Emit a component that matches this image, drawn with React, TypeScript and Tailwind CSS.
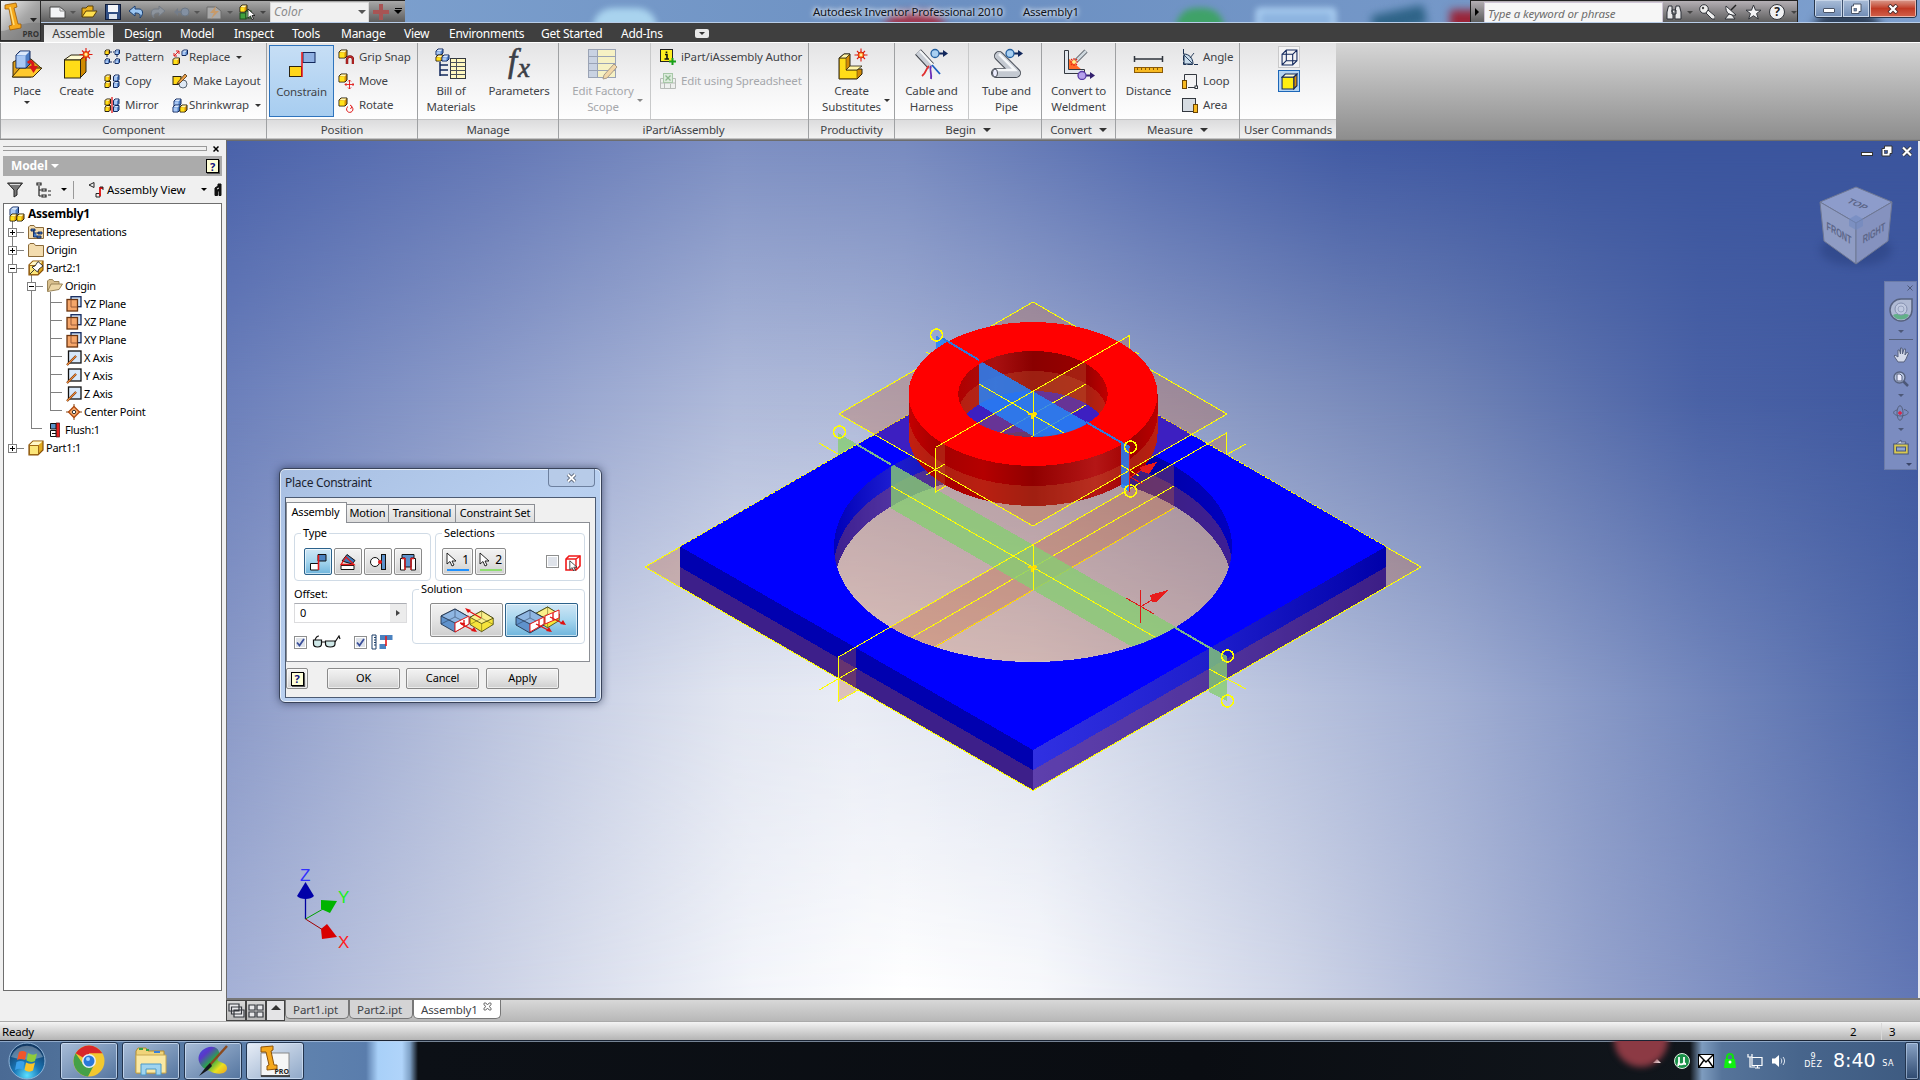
import type { ReactNode } from "react";
import clsx from "clsx";

const NAVY = "#12285c";
const TINT = "rgba(197,100,54,0.31)";
const GREEN = "rgba(135,205,115,0.8)";
const BLUE = "rgba(38,130,247,0.86)";

/* ---------- icon helpers ---------- */

function Svg({ w = 16, h = 16, className, children }: { w?: number; h?: number; className?: string; children: ReactNode }) {
  return (
    <svg width={w} height={h} viewBox={`0 0 ${w} ${h}`} className={clsx("block shrink-0", className)} fill="none">
      {children}
    </svg>
  );
}

// small isometric-ish block used in most of the ribbon icons
function Block({ x, y, w, h, d = 2, blue }: { x: number; y: number; w: number; h: number; d?: number; blue?: boolean }) {
  const front = blue ? "#a9c8f4" : "#ffe21a";
  const side = blue ? "#4f7fc4" : "#d9940a";
  const stroke = blue ? NAVY : "#2b2410";
  return (
    <g strokeWidth="1" strokeLinejoin="round">
      <path d={`M${x} ${y + d}l${d} ${-d}h${w}v${h}l${-d} ${d}h${-w}z`} fill={side} stroke={stroke} />
      <path d={`M${x + 0.5} ${y + d}l${d} ${-d + 0.5}h${w - 1}l${-d} ${d}z`} fill={blue ? "#dce9fb" : "#fff9b8"} />
      <rect x={x + 0.5} y={y + d + 0.5} width={w - 1} height={h - 1} fill={front} />
    </g>
  );
}

function Star({ x, y }: { x: number; y: number }) {
  return (
    <g transform={`translate(${x} ${y})`}>
      <path d="M0-6.5V6.5M-6.5 0H6.5M-4-4L4 4M4-4L-4 4" stroke="#e01b10" strokeWidth="1.1" />
      <circle r="3" fill="#ff7a1a" stroke="#d42a10" />
      <circle r="1.4" fill="#fff3a0" />
    </g>
  );
}

function Down({ className }: { className?: string }) {
  return <span className={clsx("block size-0 shrink-0 border-x-[3px] border-t-[3px] border-x-transparent", className ?? "border-t-[#333]")} />;
}

/* ---------- ribbon icons ---------- */

const PlaceIcon = () => (
  <Svg w={32} h={32}>
    <path d="M2 14L8 11H20L30 20L20 29H2z" fill="#e0a018" stroke="#3a2a08" />
    <path d="M1 29L9 20H31L22 29z" fill="#ffc92e" stroke="#3a2a08" />
    <Block x={5} y={3} w={10} h={13} d={4} blue />
    <path d="M17 15C20 12 22 14 22 18" stroke="#d81818" strokeWidth="3" />
    <path d="M18 18H27L22.500 25z" fill="#d81818" />
  </Svg>
);
const CreateIcon = () => (
  <Svg w={32} h={32}>
    <path d="M3 12L10 7H25L19 12z" fill="#fffbd0" stroke="#2b2410" />
    <path d="M19 12L25 7V24L19 30z" fill="#d08a00" stroke="#2b2410" />
    <rect x="3.500" y="12" width="16" height="18" fill="#ffdc18" stroke="#2b2410" />
    <Star x={25} y={6.500} />
  </Svg>
);
const ConstrainIcon = () => (
  <Svg w={30} h={28}>
    <rect x="16" y="2.500" width="12" height="10" fill="#8fb0e2" stroke={NAVY} />
    <rect x="2.500" y="16.500" width="12" height="10" fill="#ffd61a" stroke="#2b2410" />
    <path d="M15 2V27" stroke="#f01010" strokeWidth="1.500" />
  </Svg>
);
const BomIcon = () => (
  <Svg w={32} h={32}>
    <Block x={1} y={1} w={5} h={4} blue />
    <Block x={1} y={7} w={5} h={4} />
    <Block x={7} y={7} w={5} h={4} blue />
    <path d="M5 14V28M5 17H13M5 22H13M5 27H13" stroke={NAVY} strokeWidth="1.500" />
    <rect x="15.500" y="10.500" width="15" height="20" fill="#fff8c0" stroke="#33383f" />
    <path d="M15.500 14.500H30.500M15.500 18.500H30.500M15.500 22.500H30.500M15.500 26.500H30.500M21.500 10.500V30.500" stroke="#4d525b" />
  </Svg>
);
const FxIcon = () => (
  <span className="flex h-8 w-8 items-start pl-[5px] font-['Liberation_Serif',serif] text-[33px] leading-[27px] text-[#3c4048] italic [-webkit-text-stroke:0.6px_#3c4048]">
    f<span className="mt-[7px] ml-px text-[27px]">x</span>
  </span>
);
const TableIcon = () => (
  <Svg w={32} h={32}>
    <rect x="1.500" y="1.500" width="27" height="28" fill="#f6f1c4" stroke="#9aa3b5" />
    <rect x="2" y="2" width="8" height="27" fill="#c9d2e2" />
    <path d="M1 8.500H28M1 15.500H28M1 22.500H28M10.500 1V30" stroke="#9aa3b5" />
    <path d="M17 27L27 16L30 19L20 30L16 31z" fill="#f2d7a8" stroke="#a89a88" />
  </Svg>
);
const SubstituteIcon = () => (
  <Svg w={32} h={32}>
    <path d="M3 10L8 6H14V18L17 21H26V26L21 31H3z" fill="#d38b08" stroke="#2b2410" />
    <path d="M3.500 10H10V22H21V30.500H3.500z" fill="#ffdc18" stroke="#57430a" strokeWidth=".6" />
    <path d="M3.500 10L8 6H14L10 10zM10 22L14 18H26L21 22z" fill="#fff5a8" stroke="#2b2410" strokeWidth=".8" />
    <Star x={25} y={7} />
  </Svg>
);
const BallArrow = ({ x, y, purple }: { x: number; y: number; purple?: boolean }) => (
  <g transform={`translate(${x} ${y})`}>
    <path d="M4 0H9" stroke={purple ? "#33206e" : NAVY} strokeWidth="2" />
    <path d="M8-3.500L13 0L8 3.500z" fill={purple ? "#33206e" : NAVY} />
    <circle r="4" fill={purple ? "#b5a0ec" : "#a9d0f2"} stroke={purple ? "#5a3ca8" : "#2460a0"} strokeWidth="1.300" />
  </g>
);
const CableIcon = () => (
  <Svg w={34} h={32}>
    <path d="M3 4L16 18" stroke="#3d4148" strokeWidth="8" />
    <path d="M3 4L16 18" stroke="#c9ced6" strokeWidth="6" />
    <path d="M5 3L18 17" stroke="#f4f6f8" strokeWidth="2" />
    <path d="M14 18C11 20 12 24 7 28" stroke="#e03030" strokeWidth="1.800" />
    <path d="M16 18C14 22 17 24 16 31" stroke="#6a30b8" strokeWidth="1.800" />
    <path d="M17 17L25 26" stroke="#1a5fc0" strokeWidth="1.800" />
    <BallArrow x={20} y={5.500} />
  </Svg>
);
const TubeIcon = () => (
  <Svg w={34} h={32}>
    <path d="M9 8L26 25H6" stroke="#474c55" strokeWidth="10" strokeLinecap="round" strokeLinejoin="round" />
    <path d="M9 8L26 25H6" stroke="#c4c9d1" strokeWidth="8" strokeLinecap="round" strokeLinejoin="round" />
    <path d="M9 6L25 22H6" stroke="#f5f7f9" strokeWidth="2.500" />
    <ellipse cx="5" cy="25" rx="2.500" ry="4" fill="#eef" stroke="#474c55" />
    <BallArrow x={20} y={5.500} />
  </Svg>
);
const WeldIcon = () => (
  <Svg w={34} h={32}>
    <path d="M6 10L20 22H6z" fill="#ff6a28" />
    <path d="M2.500 2.500H6.500V21.500H22.500V25.500H2.500z" fill="#e3e8ee" stroke="#33383f" />
    <path d="M14 13L24 3" stroke="#5a6068" strokeWidth="4.500" />
    <path d="M14 13L24 3" stroke="#cfd8de" strokeWidth="2.500" />
    <path d="M12 10V18M8 14H16M9 11L15 17M15 11L9 17" stroke="#e82c10" strokeWidth="1.200" />
    <circle cx="12" cy="14" r="2" fill="#fff08a" />
    <BallArrow x={20} y={27.500} purple />
  </Svg>
);
const DistanceIcon = () => (
  <Svg w={32} h={32}>
    <path d="M1.500 8V14M29.500 8V14M1.500 11H29.500" stroke="#2f343c" strokeWidth="1.500" />
    <rect x="1.500" y="19.500" width="28" height="5" fill="#f7b921" stroke="#8a5a08" />
    <path d="M4.500 20V22M8.500 20V22M12.500 20V22M16.500 20V22M20.500 20V22M24.500 20V22" stroke="#8a5a08" />
  </Svg>
);

const PatternIcon = () => (
  <Svg>
    <path d="M6 3H10M3 6V10M13 6V10M6 13H10" stroke={NAVY} strokeDasharray="2 1" />
    <Block x={1} y={1} w={3.500} h={3.500} d={1} />
    <Block x={11} y={1} w={3.500} h={3.500} d={1} blue />
    <Block x={1} y={10} w={3.500} h={3.500} d={1} blue />
    <Block x={11} y={10} w={3.500} h={3.500} d={1} blue />
  </Svg>
);
const CopyIcon = ({ mirror }: { mirror?: boolean }) => (
  <Svg>
    <Block x={1} y={2} w={4} h={4.500} d={1.500} />
    <Block x={1} y={8.500} w={4} h={4.500} d={1.500} />
    <Block x={9.500} y={2} w={4} h={4.500} d={1.500} blue />
    <Block x={9.500} y={8.500} w={4} h={4.500} d={1.500} blue />
    {mirror && <path d="M8 0V16" stroke="#e01818" strokeWidth="1.300" />}
  </Svg>
);
const ReplaceIcon = () => (
  <Svg>
    <Block x={10} y={1} w={4} h={4} d={1.500} blue />
    <Block x={1} y={9} w={5} h={5} d={1.500} />
    <path d="M2 7L7 2M2 4V7H5M4 2H7V5" stroke="#e01818" />
  </Svg>
);
const LayoutIcon = () => (
  <Svg>
    <rect x="1" y="3.500" width="8" height="8" fill="#ffd81a" stroke="#2b2410" />
    <circle cx="11" cy="11" r="4" fill="#dfe9f5" stroke="#5a6572" />
    <path d="M6 9L13 1L15 3L8 10L5 11z" fill="#eca04a" stroke="#4a3010" strokeWidth=".8" />
  </Svg>
);
const ShrinkIcon = () => (
  <Svg>
    <Block x={2} y={2} w={5} h={5} blue />
    <Block x={1} y={8} w={5} h={5} blue />
    <Block x={8} y={8} w={5} h={5} />
  </Svg>
);
const GripIcon = () => (
  <Svg>
    <Block x={1} y={1} w={6} h={6} />
    <path d="M9 15V10.500a3 3 0 0 1 6 0V15" stroke="#7a1010" strokeWidth="2.500" />
    <path d="M9 15V10.500a3 3 0 0 1 6 0V15" stroke="#d83030" strokeWidth="1" />
  </Svg>
);
const MoveIcon = () => (
  <Svg>
    <Block x={1} y={1} w={6} h={6} />
    <path d="M11.500 7V16M7 11.500H16M10 8.500L11.500 7L13 8.500M10 14.500L11.500 16L13 14.500M8.500 10L7 11.500L8.500 13M14.500 10L16 11.500L14.500 13" stroke="#e01818" strokeWidth=".9" />
  </Svg>
);
const RotateIcon = () => (
  <Svg>
    <Block x={1} y={1} w={6} h={6} />
    <path d="M13.500 9.500A3.200 3.200 0 1 1 10 9.500M12 8l2 1.500L12.500 12" stroke="#e01818" />
  </Svg>
);
const AuthorIcon = () => (
  <Svg>
    <rect x=".5" y=".5" width="12" height="12" fill="#ffee20" stroke="#222" />
    <path d="M6.500 2.500V4M5 5.500H7V10M4.500 10H9" stroke="#111" strokeWidth="1.600" />
    <path d="M12.500 9V16M9 12.500H16" stroke="#18a018" strokeWidth="2" />
  </Svg>
);
const SheetIcon = () => (
  <Svg>
    <path d="M.5 5.500H15.500V15.500H.5zM.5 10H15.500M4.500 5V15M10.500 11V15" fill="#eef0ee" stroke="#b8bcb8" />
    <rect x="3.500" y=".5" width="9" height="9" fill="#dcebdc" stroke="#a8c8a8" />
    <path d="M5.500 2.500L10.500 7.500M10.500 2.500L5.500 7.500" stroke="#8cb88c" strokeWidth="1.300" />
  </Svg>
);
const AngleIcon = () => (
  <Svg>
    <path d="M1.500 0V15.500H16" stroke="#1a3050" strokeDasharray="5 1.500" />
    <path d="M2 5C7 5 11 9 11 15H2z" fill="#c9dceb" stroke="#1a3050" />
    <path d="M2 6L10 14M8 9L12 4" stroke="#1a3050" strokeWidth=".9" />
  </Svg>
);
const LoopIcon = () => (
  <Svg>
    <path d="M2.500 7V1.500H14.500V14.500H6" stroke="#33383f" />
    <rect x="13" y="13" width="2.500" height="2.500" fill="#fff" stroke="#33383f" />
    <rect x=".5" y="7.500" width="4" height="8" fill="#f7b921" stroke="#6b4505" />
  </Svg>
);
const AreaIcon = () => (
  <Svg>
    <rect x=".5" y="1.500" width="13" height="13" fill="#d6dce2" stroke="#33383f" />
    <rect x="11.500" y="7.500" width="4" height="8" fill="#f7b921" stroke="#6b4505" />
  </Svg>
);

/* ---------- ribbon ---------- */

function Big({ icon, label, sub, width, arrow, dim }: { icon: ReactNode; label: string; sub?: string; width: string; arrow?: boolean; dim?: boolean }) {
  return (
    <div className={clsx("relative flex flex-col items-center pt-[5px] text-center", width, dim ? "text-[#a5a7ab]" : "text-[#3f4347]")}>
      <div className="flex h-8 items-center justify-center">{icon}</div>
      <span className="mt-[3px] leading-4">{label}</span>
      {sub && <span className="leading-4">{sub}</span>}
      {arrow && !sub && <Down className="mt-[2px] border-t-[#333]" />}
      {arrow && sub && <Down className={clsx("absolute right-0 bottom-[17px]", dim ? "border-t-[#888]" : "border-t-[#333]")} />}
    </div>
  );
}

function Small({ icon, label, arrow, gap = "gap-[5px]", dim }: { icon: ReactNode; label: string; arrow?: boolean; gap?: string; dim?: boolean }) {
  return (
    <div className={clsx("flex h-6 items-center whitespace-nowrap", gap, dim ? "text-[#a5a7ab]" : "text-[#3f4347]")}>
      {icon}
      <span>{label}</span>
      {arrow && <Down className="ml-[5px] border-t-[#333]" />}
    </div>
  );
}

function Panel({ width, title, arrow, children }: { width: string; title: string; arrow?: boolean; children: ReactNode }) {
  return (
    <div className={clsx("flex shrink-0 flex-col border-r border-[#9fa1a3]", width)}>
      <div className="flex h-[76px] bg-linear-to-b from-[#e4e4e5] via-[#f3f3f4] to-[#fefefe]">{children}</div>
      <div className="flex h-5 items-center justify-center gap-[7px] border-y border-[#c3c3c4] bg-linear-to-b from-[#dcdcdd] to-[#f2f2f2] pt-[2px] text-[#3f4347]">
        {title}
        {arrow && <span className="block size-0 border-x-4 border-t-4 border-x-transparent border-t-[#333]" />}
      </div>
    </div>
  );
}

const Rows = ({ className, children }: { className?: string; children: ReactNode }) => (
  <div className={clsx("flex flex-col pt-[2px]", className)}>{children}</div>
);

function Ribbon() {
  return (
    <div className="flex h-[98px] border-t border-b border-t-white border-b-[#888] bg-linear-to-b from-[#d6d6d6] to-[#8e8e8e] font-['Noto_Sans',sans-serif] text-[11.5px] tracking-[-0.15px]">
      <Panel width="w-[267px] border-l" title="Component">
        <Big icon={<PlaceIcon />} label="Place" width="w-[51px] pl-px" arrow />
        <Big icon={<CreateIcon />} label="Create" width="w-[49px]" />
        <Rows className="ml-[3px] w-[68px]">
          <Small icon={<PatternIcon />} label="Pattern" />
          <Small icon={<CopyIcon />} label="Copy" />
          <Small icon={<CopyIcon mirror />} label="Mirror" />
        </Rows>
        <Rows>
          <Small icon={<ReplaceIcon />} label="Replace" arrow gap="gap-px" />
          <Small icon={<LayoutIcon />} label="Make Layout" />
          <Small icon={<ShrinkIcon />} label="Shrinkwrap" arrow gap="gap-px" />
        </Rows>
      </Panel>
      <Panel width="w-[151px]" title="Position">
        <div className="mt-[2px] ml-[2px] flex h-[72px] w-[65px] flex-col items-center border border-[#2f74bd] bg-linear-to-b from-[#c6def5] to-[#a7cdf0] pt-[4px] text-[#3f4347]">
          <ConstrainIcon />
          <span className="mt-[6px] leading-4">Constrain</span>
        </div>
        <Rows className="ml-1">
          <Small icon={<GripIcon />} label="Grip Snap" />
          <Small icon={<MoveIcon />} label="Move" />
          <Small icon={<RotateIcon />} label="Rotate" />
        </Rows>
      </Panel>
      <Panel width="w-[141px]" title="Manage">
        <Big icon={<BomIcon />} label="Bill of" sub="Materials" width="w-[66px]" />
        <Big icon={<FxIcon />} label="Parameters" width="w-[70px]" />
      </Panel>
      <Panel width="w-[250px]" title="iPart/iAssembly">
        <Big icon={<TableIcon />} label="Edit Factory" sub="Scope" width="w-[84px] pl-[4px] mr-[7px]" arrow dim />
        <Rows className="border-l border-[#c8c9ca] pl-[9px]">
          <Small icon={<AuthorIcon />} label="iPart/iAssembly Author" />
          <Small icon={<SheetIcon />} label="Edit using Spreadsheet" dim />
        </Rows>
      </Panel>
      <Panel width="w-[86px]" title="Productivity">
        <Big icon={<SubstituteIcon />} label="Create" sub="Substitutes" width="w-[81px] pl-[4px]" arrow />
      </Panel>
      <Panel width="w-[147px]" title="Begin" arrow>
        <Big icon={<CableIcon />} label="Cable and" sub="Harness" width="w-[73px]" />
        <Big icon={<TubeIcon />} label="Tube and" sub="Pipe" width="border-l border-[#c8c9ca] pl-[3px] flex-1" />
      </Panel>
      <Panel width="w-[74px]" title="Convert" arrow>
        <Big icon={<WeldIcon />} label="Convert to" sub="Weldment" width="w-full" />
      </Panel>
      <Panel width="w-[124px]" title="Measure" arrow>
        <Big icon={<DistanceIcon />} label="Distance" width="w-[65px]" />
        <Rows className="ml-[1px]">
          <Small icon={<AngleIcon />} label="Angle" />
          <Small icon={<LoopIcon />} label="Loop" />
          <Small icon={<AreaIcon />} label="Area" />
        </Rows>
      </Panel>
      <Panel width="w-[96px] border-r-0" title="User Commands">
        <div className="flex flex-1 flex-col items-center gap-[2px] pt-[3px] pl-[2px]">
          <div className="grid size-[22px] place-items-center border border-[#c9c9ca] bg-[#f4f4f5]">
            <Svg className="size-[17px]">
              <path d="M1 5H11V15H1zM1 5L5 1H15V11L11 15M11 5L15 1M5 1V11H15M5 11L1 15" stroke={NAVY} />
            </Svg>
          </div>
          <div className="grid size-[22px] place-items-center border border-[#1b66b8] bg-[#b4d4f2]">
            <Svg className="size-[17px]">
              <path d="M1 4L4 1H15L12 4z" fill="#fffbd0" stroke={NAVY} />
              <path d="M12 4L15 1V12L12 15z" fill="#d89008" stroke={NAVY} />
              <path d="M1 4H12V15H1z" fill="#ffee10" stroke={NAVY} />
            </Svg>
          </div>
        </div>
      </Panel>
    </div>
  );
}

/* ---------- title bar ---------- */

const menuTabs = [
  ["Design", "w-14"],
  ["Model", "w-[54px]"],
  ["Inspect", "w-[58px]"],
  ["Tools", "w-[49px]"],
  ["Manage", "w-[63px]"],
  ["View", "w-[45px]"],
  ["Environments", "w-[92px]"],
  ["Get Started", "w-[80px]"],
  ["Add-Ins", "w-[74px]"],
];

function TitleBar() {
  return (
    <header className="relative h-[42px] bg-[#3f3f3f] font-['Noto_Sans',sans-serif]">
      <div className="relative h-[23px] overflow-hidden border-b border-[#b8cde8] bg-linear-to-r from-[#86a9d4] via-[#6c90c2] to-[#7d9fce]">
        {/* blurred desktop behind the glass */}
        <div className="absolute top-[8px] left-[593px] h-10 w-[64px] rounded-full bg-[#a9d3ee] blur-[3px]" />
        <div className="absolute top-[12px] left-[884px] h-10 w-[62px] rounded-full bg-[#a03850] blur-[4px]" />
        <div className="absolute top-[8px] left-[1176px] h-10 w-[48px] rounded-full bg-[#3fa268] blur-[3px]" />
        <div className="absolute top-[8px] left-[1256px] h-10 w-[80px] rounded border-4 border-[#b5d8f8] bg-[#8db4e0] blur-[3px]" />
        <div className="absolute top-[10px] left-[1372px] h-5 w-[54px] -rotate-12 rounded bg-[#2f6488] blur-[4px]" />
        <div className="absolute top-[10px] left-[1450px] h-10 w-[44px] bg-[#9a2438] blur-[4px]" />
        <div className="absolute top-[10px] left-[1812px] h-12 w-[70px] rounded-full bg-[#31435c] blur-[5px]" />
        <div className="relative flex h-full items-start">
          <div className="h-full w-[41px] bg-[#3a3a3a]" />
          <div className="flex h-[23px] w-[364px] shrink-0 items-center border-t border-[#222] bg-linear-to-b from-[#a9a9a9] to-[#5a5a5a] pl-2">
            <Svg w={17} h={14}>
              <path d="M1 2H11L16 6V13H1z" fill="#f3f4f6" stroke="#444" />
              <path d="M11 2V6H16" stroke="#888" />
            </Svg>
            <Down className="ml-[4px] border-t-[#555]" />
            <Svg w={17} h={14} className="ml-[5px]">
              <path d="M1 12V3H5L7 1H12V5" fill="#e8b020" stroke="#5a4008" />
              <path d="M1 12L5 6H16L12 12z" fill="#ffe050" stroke="#5a4008" />
            </Svg>
            <Svg w={16} h={16} className="ml-[7px]">
              <rect x=".5" y=".5" width="15" height="15" fill="#314f84" stroke="#101c38" />
              <rect x="3" y="1" width="10" height="7" fill="#f4f6fa" />
              <rect x="4" y="10" width="8" height="5" fill="#dfe6f0" />
            </Svg>
            <Svg w={16} h={14} className="ml-[7px]">
              <path d="M1 6L7 1V4H11C15 4 16 9 12 13C13 9 11 8 7 8V11z" fill="#9cc6f2" stroke="#1c3f70" />
            </Svg>
            <Svg w={16} h={14} className="ml-[6px]">
              <path d="M15 6L9 1V4H5C1 4 0 9 4 13C3 9 5 8 9 8V11z" fill="#8d949d" stroke="#747b84" />
            </Svg>
            <Svg w={18} h={14} className="ml-[7px]">
              <path d="M1 7L5 3V6H9V8H5V11z" fill="#747c88" />
              <circle cx="12" cy="7" r="4" fill="#8390a2" stroke="#6d7885" />
            </Svg>
            <Down className="ml-[3px] border-t-[#555]" />
            <Svg w={17} h={15} className="ml-[6px]">
              <path d="M1 2H10L15 6V14H1z" fill="#a9a9a9" stroke="#6c6c6c" />
              <path d="M10 1L4 8H8L5 14L13 6H9z" fill="#c79a6a" />
            </Svg>
            <Down className="ml-[4px] border-t-[#555]" />
            <Svg w={17} h={16} className="ml-[6px]">
              <Block x={1} y={1} w={5} h={5} />
              <rect x="1" y="9" width="6" height="6" fill="#3fa03f" stroke="#1c4c1c" />
              <rect x="7" y="7" width="5" height="7" fill="#8ed08e" stroke="#1c4c1c" />
              <path d="M9 5V14L11.500 12L13 15.500L14.500 15L13 11.500H16z" fill="#fff" stroke="#111" strokeWidth=".8" />
            </Svg>
            <Down className="ml-[4px] border-t-[#444]" />
            <div className="ml-[4px] flex h-[21px] w-[99px] shrink-0 items-center justify-between border border-[#d8d8d8] bg-[#f0f0f0] pr-[2px] pl-[3px] text-[12px] text-[#8a8a8a] italic">
              Color
              <span className="block size-0 border-x-4 border-t-4 border-x-transparent border-t-[#555]" />
            </div>
            <Svg w={16} h={16} className="ml-[4px]">
              <path d="M6 0h4v6h6v4h-6v6h-4v-6h-6v-4h6z" fill="#a85454" />
            </Svg>
            <span className="mb-[2px] ml-[5px] flex flex-col items-center gap-px">
              <i className="block h-px w-[7px] bg-black" />
              <i className="block size-0 border-x-4 border-t-4 border-x-transparent border-t-black" />
            </span>
          </div>
          <div className="flex flex-1 gap-[20px] pt-[4px] pl-[408px] text-[11.5px] leading-4 tracking-[-0.25px] whitespace-nowrap text-[#10151c] [text-shadow:0_0_6px_#fff,0_0_4px_#fff]">
            <span>Autodesk Inventor Professional 2010</span>
            <span>Assembly1</span>
          </div>
          <div className="flex h-[23px] w-[328px] shrink-0 items-center border-x border-t border-[#222] bg-linear-to-b from-[#b5b0b5] to-[#5a5a5a]">
            <span className="ml-[4px] block size-0 border-y-4 border-l-4 border-y-transparent border-l-black" />
            <div className="ml-[5px] flex h-[21px] w-[180px] items-center border border-[#cfc6d6] bg-[#f6f6f6] pt-1 pl-[3px] text-[11.5px] tracking-[-0.1px] text-[#6c6c6c] italic">
              Type a keyword or phrase
            </div>
            <Svg w={16} h={16} className="ml-[3px]">
              <path d="M2.500 2H6V8H7V15H1V8zM10 2H13.500L15 8V15H9V8zM6 6H10V10H6z" fill="#e8e8ea" stroke="#2d3038" />
            </Svg>
            <Down className="ml-[5px] border-t-[#444]" />
            <Svg w={16} h={16} className="ml-[6px]">
              <circle cx="5" cy="5" r="4.300" fill="#eee" stroke="#33363c" />
              <path d="M7 9L13 15H16V12L9 6z" fill="#eee" stroke="#33363c" />
              <circle cx="4" cy="4" r="1.200" fill="#444" />
            </Svg>
            <Svg w={15} h={16} className="ml-[8px]">
              <path d="M3 2C2 9 7 12 13 11z" fill="#f3f3f4" stroke="#33363c" />
              <path d="M8 6L13 1" stroke="#222" strokeWidth="1.500" />
              <path d="M6 10L2 15H12L9 11z" fill="#eee" stroke="#33363c" />
            </Svg>
            <Svg w={17} h={16} className="ml-[7px]">
              <path d="M8.500 1L10.500 6.200H16L11.600 9.500L13.300 15L8.500 11.700L3.700 15L5.400 9.500L1 6.200H6.500z" fill="#f4f4f6" stroke="#33363c" />
            </Svg>
            <span className="ml-[7px] grid size-4 shrink-0 place-items-center rounded-full border border-[#33363c] bg-[#f0f0f2] text-[12px] leading-none font-bold text-[#222]">?</span>
            <Down className="ml-[6px] border-t-[#444]" />
          </div>
          <div className="mr-[3px] ml-4 flex h-[18px] w-[103px] shrink-0 overflow-hidden rounded-b-[4px] border border-t-0 border-[#27364c] text-white">
            <div className="grid w-7 place-items-center border-r border-[#3c506e] bg-linear-to-b from-[#a9bdd8] to-[#6f8bb4] shadow-[inset_0_0_0_1px_#c7d5e8]">
              <i className="mt-1 block h-[5px] w-3 rounded-[1px] border border-[#4b566a] bg-white" />
            </div>
            <div className="grid w-[27px] place-items-center border-r border-[#3c506e] bg-linear-to-b from-[#a9bdd8] to-[#6f8bb4] shadow-[inset_0_0_0_1px_#c7d5e8]">
              <Svg w={12} h={12}>
                <path d="M3.500 1H11V8.500H9V10.500H1.500V3H3.500z" fill="#fff" stroke="#4b566a" />
                <rect x="4" y="5.500" width="2.500" height="2.500" fill="#6f8bb4" stroke="#4b566a" strokeWidth=".7" />
              </Svg>
            </div>
            <div className="grid flex-1 place-items-center bg-linear-to-b from-[#d8998c] via-[#c03a24] to-[#d2604a] shadow-[inset_0_0_0_1px_#eab5ab]">
              <Svg w={12} h={10}>
                <path d="M2 1L10 9M10 1L2 9" stroke="#4b2a2a" strokeWidth="4" />
                <path d="M2.500 1.500L9.500 8.500M9.500 1.500L2.500 8.500" stroke="#fff" strokeWidth="2.300" />
              </Svg>
            </div>
          </div>
        </div>
      </div>
      <nav className="flex h-[19px] items-end pl-11 text-[12px] leading-4 tracking-[-0.25px] whitespace-nowrap text-white">
        <span className="h-[17px] w-[69px] bg-linear-to-b from-[#dcdcdc] to-[#f0f0f0] pt-px text-center text-[#3c3c3c]">Assemble</span>
        <span className="w-[11px]" />
        {menuTabs.map(([label, width]) => (
          <span key={label} className={clsx("shrink-0", width)}>
            {label}
          </span>
        ))}
        <span className="mb-[4px] grid h-[9px] w-[14px] place-items-center rounded-[2px] bg-[#e8e8e8]">
          <Down />
        </span>
      </nav>
      {/* application button */}
      <div className="absolute top-0 left-0 h-[41px] w-[41px] border border-[#2a2a2a] bg-linear-to-br from-[#f4f4f4] via-[#a8a8a8] to-[#7d7d7d]">
        <svg width="39" height="39" viewBox="0 0 39 39" fill="none">
          <path d="M0 30C10 30 18 20 39 22V39H0z" fill="#707070" opacity=".45" />
          <path d="M4 4L15 2L16 6L13 7L17 23L20 23L20 27L9 29L8 25L11 24L8 8L4 8z" fill="#f5a81c" stroke="#9c5c08" strokeWidth=".8" />
          <path d="M9 6L13 24" stroke="#ffdf80" strokeWidth="1.500" />
          <path d="M29 17H36L32.500 21z" fill="#222" />
        </svg>
        <span className="absolute right-[1px] bottom-[1px] text-[8px] leading-[10px] font-bold text-[#333]">PRO</span>
      </div>
    </header>
  );
}

/* ---------- model browser ---------- */

type Kind = "asm" | "rep" | "folder" | "pinned" | "open" | "plane" | "axis" | "point" | "flush" | "part";

function TreeIcon({ kind }: { kind: Kind }) {
  switch (kind) {
    case "asm":
      return (
        <Svg>
          <Block x={1} y={1} w={6} h={6} d={2.500} blue />
          <Block x={1} y={8} w={5} h={5} />
          <Block x={8} y={8} w={5} h={5} />
        </Svg>
      );
    case "rep":
    case "folder":
      return (
        <Svg>
          <path d="M.5 14.500V3L2 1.500H6L7.500 3.500H15.500V14.500z" fill="#f3dcae" stroke="#8a6a3a" />
          {kind === "rep" && <path d="M5.500 6V13H10M5.500 9H12M3 5H7V7H3zM10 8H14V10H10zM9 12H13V14H9z" fill="#3f7ac8" stroke={NAVY} strokeWidth=".9" />}
        </Svg>
      );
    case "open":
      return (
        <Svg>
          <path d="M.5 13V3L2 1.500H5.500L7 3.500H12V6" fill="#d9c08e" stroke="#9a8458" />
          <path d="M.5 13.500L4 6H15.500L12 11.500z" fill="#ecd6a6" stroke="#9a8458" />
        </Svg>
      );
    case "part":
    case "pinned":
      return (
        <Svg>
          <path d="M1 5L5 1H15V10L10 15H1z" fill="#e0aa20" stroke="#8a5208" strokeWidth="1.200" />
          <path d="M1.500 5L5 1.500H14.500L10.500 5z" fill="#fff8c8" />
          <path d="M1.500 5.500H10.500V14.500H1.500z" fill="#fbe67a" stroke="#8a5208" strokeWidth=".8" />
          {kind === "pinned" && <path d="M2 14L6.500 9.500L4 7L7 6L10 1.500L15 6L11 9L9.500 12L6.500 9.500" fill="#fff" stroke="#222" strokeWidth=".9" />}
        </Svg>
      );
    case "plane":
      return (
        <Svg>
          <rect x="5" y=".7" width="10" height="10" fill="#cfe2f8" stroke={NAVY} strokeWidth="1.300" />
          <rect x="1" y="3.500" width="10.500" height="11.500" fill="#f5a66a" stroke="#6b3510" strokeWidth="1.300" />
          <path d="M5 4V11H11" stroke="#9a5a38" />
        </Svg>
      );
    case "axis":
      return (
        <Svg>
          <rect x="2.500" y="1" width="12.500" height="12" fill="#d8e8fa" stroke="#111" strokeWidth="1.300" />
          <path d="M1 15L10 6" stroke="#4a2408" strokeWidth="2.200" />
          <path d="M1 15L10 6" stroke="#f08838" strokeWidth="1.200" />
        </Svg>
      );
    case "point":
      return (
        <Svg>
          <path d="M8 0V16M0 8H16" stroke="#8a4a18" />
          <path d="M8 2.500L13.500 8L8 13.500L2.500 8z" fill="#f8a868" stroke="#b04a10" strokeWidth="1.300" />
          <circle cx="8" cy="8" r="1.700" fill="#fff" stroke="#333" />
        </Svg>
      );
    default:
      return (
        <Svg>
          <path d="M3.500 1.500H9V7H3.500z" fill="#5b93c8" stroke="#111" />
          <path d="M3.500 8.500H9V14.500H3.500zM5 11.500H9" fill="#fff" stroke="#111" />
          <rect x="9.500" y="1" width="3" height="14" fill="#e82020" stroke="#500" strokeWidth=".7" />
        </Svg>
      );
  }
}

const tree: { label: string; kind: Kind; pad: string; box?: "+" | "-" }[] = [
  { label: "Representations", kind: "rep", pad: "pl-[4px]", box: "+" },
  { label: "Origin", kind: "folder", pad: "pl-[4px]", box: "+" },
  { label: "Part2:1", kind: "pinned", pad: "pl-[4px]", box: "-" },
  { label: "Origin", kind: "open", pad: "pl-[23px]", box: "-" },
  { label: "YZ Plane", kind: "plane", pad: "pl-[62px]" },
  { label: "XZ Plane", kind: "plane", pad: "pl-[62px]" },
  { label: "XY Plane", kind: "plane", pad: "pl-[62px]" },
  { label: "X Axis", kind: "axis", pad: "pl-[62px]" },
  { label: "Y Axis", kind: "axis", pad: "pl-[62px]" },
  { label: "Z Axis", kind: "axis", pad: "pl-[62px]" },
  { label: "Center Point", kind: "point", pad: "pl-[62px]" },
  { label: "Flush:1", kind: "flush", pad: "pl-[43px]" },
  { label: "Part1:1", kind: "part", pad: "pl-[4px]", box: "+" },
];

function HelpIcon() {
  return (
    <span className="grid h-[14px] w-[13px] place-items-center border border-black bg-[#ffffd8] text-[11px] leading-none font-bold text-[#101080] shadow-[1px_1px_0_#555]">?</span>
  );
}

function Browser() {
  return (
    <aside className="flex w-[226px] shrink-0 flex-col bg-[#f0f0f0] pr-[3px] pl-[3px] font-['Noto_Sans',sans-serif] text-[11px] text-black">
      <div className="flex h-[16px] items-center gap-[6px] pt-[1px]">
        <div className="h-[5px] w-[204px] border border-l-0 border-[#9a9a9a]" />
        <Svg w={6} h={6}>
          <path d="M.5 .5L5.500 5.500M5.500 .5L.5 5.500" stroke="#000" strokeWidth="1.500" />
        </Svg>
      </div>
      <div className="flex h-5 w-[219px] items-center bg-[#ababab] pr-[3px] pl-[8px] text-[12px] font-bold tracking-[-0.1px] text-white">
        Model
        <span className="ml-[3px] block size-0 border-x-4 border-t-4 border-x-transparent border-t-white" />
        <span className="flex-1" />
        <HelpIcon />
      </div>
      <div className="flex h-[27px] w-[219px] items-center pl-[4px] text-[11.5px] tracking-[-0.1px]">
        <Svg>
          <path d="M.5 1H15.500L10 8V13L7 15V8z" fill="#777" stroke="#222" />
          <path d="M3 2.500H13" stroke="#ddd" />
        </Svg>
        <Svg className="ml-[13px]">
          <path d="M1 1H5V3H1zM3 4V14M3 8H5M3 14H5M6 7H10V9H6zM6 13H10V15H6zM12 9H15M12 13H15" stroke="#222" strokeWidth="1.200" />
        </Svg>
        <Down className="ml-[9px] border-t-black" />
        <span className="mx-[6px] h-[18px] w-px bg-[#999]" />
        <Svg className="ml-[8px]">
          <path d="M1 3L6 .5V5.500z" stroke="#222" />
          <path d="M8 11.500H12V15H8z" stroke="#222" />
          <path d="M12 14V6H15" stroke="#e01010" strokeWidth="1.800" />
          <path d="M12 5H15V8" stroke="#222" />
        </Svg>
        <span className="ml-[3px] w-[79px] whitespace-nowrap">Assembly View</span>
        <Down className="ml-[15px] border-t-black" />
        <Svg w={8} h={14} className="ml-[7px]">
          <path d="M1 5L4 3V1H7V12.500H5V8H3.500V12.500H1z" fill="#111" stroke="#111" />
          <path d="M3 6L5 5" stroke="#f0f0f0" />
        </Svg>
      </div>
      <div className="relative h-[788px] w-[219px] border border-[#6e6e6e] bg-white pt-[1px]">
        <svg className="absolute top-0 left-0" width="80" height="250" stroke="#808080" shapeRendering="crispEdges" fill="none">
          <path d="M8.500 17V240M27.500 70V224.500H38M46.500 88V206.500H58M46.500 98.500H58M46.500 116.500H58M46.500 134.500H58M46.500 152.500H58M46.500 170.500H58M46.500 188.500H58" />
        </svg>
        <div className="relative flex h-[18px] items-center gap-[3px] pl-[5px] text-[12px] font-bold tracking-[-0.25px]">
          <TreeIcon kind="asm" />
          Assembly1
        </div>
        {tree.map((item, i) => (
          <div key={i} className={clsx("relative flex h-[18px] items-center whitespace-nowrap", item.pad)}>
            {item.box && (
              <>
                <span className="grid size-[9px] place-items-center border border-[#808080] bg-white">
                  <Svg w={5} h={5}>
                    <path d={item.box === "+" ? "M0 2.500H5M2.500 0V5" : "M0 2.500H5"} stroke="#000" />
                  </Svg>
                </span>
                <span className="mr-[4px] h-px w-[7px] bg-[#808080]" />
              </>
            )}
            <TreeIcon kind={item.kind} />
            <span className="ml-[2px] tracking-[-0.25px]">{item.label}</span>
          </div>
        ))}
      </div>
    </aside>
  );
}

/* ---------- 3D scene ---------- */

function Scene() {
  return (
    <svg className="absolute -top-px -left-px" width="1694" height="858" viewBox="226 140 1694 858" fill="none" shapeRendering="crispEdges">
      <defs>
        <linearGradient id="slabRight" gradientUnits="userSpaceOnUse" x1="1033" y1="0" x2="1386" y2="0">
          <stop offset="0" stopColor="#3030e2" />
          <stop offset=".5" stopColor="#1e1ecc" />
          <stop offset="1" stopColor="#0000aa" />
        </linearGradient>
        <linearGradient id="holeWall" gradientUnits="userSpaceOnUse" x1="834" y1="0" x2="1232" y2="0">
          <stop offset="0" stopColor="#0000b8" />
          <stop offset=".14" stopColor="#1c1cd0" />
          <stop offset=".35" stopColor="#1414a8" />
          <stop offset=".75" stopColor="#0000a0" />
          <stop offset="1" stopColor="#0000c0" />
        </linearGradient>
        <linearGradient id="ringWall" gradientUnits="userSpaceOnUse" x1="908" y1="0" x2="1158" y2="0">
          <stop offset="0" stopColor="#c40000" />
          <stop offset=".12" stopColor="#a40000" />
          <stop offset=".3" stopColor="#b40000" />
          <stop offset=".5" stopColor="#900000" />
          <stop offset=".75" stopColor="#b41616" />
          <stop offset=".9" stopColor="#a00000" />
          <stop offset="1" stopColor="#b80000" />
        </linearGradient>
        <linearGradient id="ringInner" gradientUnits="userSpaceOnUse" x1="958" y1="0" x2="1108" y2="0">
          <stop offset="0" stopColor="#b00000" />
          <stop offset=".25" stopColor="#a81010" />
          <stop offset=".5" stopColor="#8a0000" />
          <stop offset=".85" stopColor="#980000" />
          <stop offset="1" stopColor="#c00000" />
        </linearGradient>
        <clipPath id="holeTop"><ellipse cx="1033" cy="547" rx="199" ry="115" /></clipPath>
        <clipPath id="holeRight"><rect x="891" y="400" width="283" height="300" /></clipPath>
        <clipPath id="ringTop"><ellipse cx="1033" cy="394" rx="74.700" ry="43" /></clipPath>
        <clipPath id="ringSpan"><rect x="979" y="300" width="107" height="200" /></clipPath>
        <mask id="wallMask" maskUnits="userSpaceOnUse" x="800" y="400" width="500" height="320">
          <ellipse cx="1033" cy="547" rx="199" ry="115" fill="#fff" />
          <ellipse cx="1033" cy="587" rx="199" ry="115" fill="#000" />
        </mask>
        <mask id="ringMask" maskUnits="userSpaceOnUse" x="900" y="300" width="300" height="240">
          <ellipse cx="1033" cy="394" rx="74.700" ry="43" fill="#fff" />
          <ellipse cx="1033" cy="434" rx="74.700" ry="43" fill="#000" />
        </mask>
        <mask id="ringMaskUpper" maskUnits="userSpaceOnUse" x="900" y="300" width="300" height="240">
          <ellipse cx="1033" cy="394" rx="74.700" ry="43" fill="#fff" />
          <ellipse cx="1033" cy="414" rx="74.700" ry="43" fill="#000" />
        </mask>
      </defs>

      {/* base slab */}
      <path d="M680 546.500L1033 343L1386 546.500L1033 750zM834 547a199 115 0 1 0 398 0a199 115 0 1 0 -398 0z" fill="#0000ff" fillRule="evenodd" />
      <path d="M680 546.500L1033 750V790L680 587z" fill="#0000b0" />
      <path d="M1386 546.500L1033 750V790L1386 587z" fill="url(#slabRight)" />
      <path d="M680 567L1033 770L1386 567V587L1033 790.500L680 587zM645 567L680 547V587zM1421 567L1386 547V587z" fill={TINT} />
      <rect x="834" y="432" width="398" height="230" fill="url(#holeWall)" mask="url(#wallMask)" />
      <g clipPath="url(#holeTop)">
        <ellipse cx="1033" cy="567" rx="199" ry="115" fill={TINT} />
        <g clipPath="url(#holeRight)">
          <path d="M1033 545L1226.500 433V478L1033 590z" fill={TINT} />
        </g>
        <path d="M838.500 657L1033 545V590L838.500 701z" fill={TINT} />
        <g stroke="#ffff00">
          <path d="M911 638L1174 486" />
          <path d="M935 647L1174 508" stroke="#ffd800" />
        </g>
        <g clipPath="url(#holeRight)">
          <path d="M838 433L1226.500 656V701L838 478z" fill={GREEN} />
          <path d="M891 486L1160 640" stroke="#ffff00" />
        </g>
      </g>
      <path d="M838.500 657L856 647V692L838.500 701zM1226.500 433V455L1208 444z" fill={TINT} />
      <path d="M838 433V455L857 444zM1209 646L1226.500 656V701L1209 692z" fill={GREEN} />
      <path d="M857 444.500L891 464.500M1174 627L1210 648" stroke="#7db78c" strokeWidth="2" />
      <g stroke="#ffff00">
        <path d="M680 547L645 567L1033 790.500L1421 567L1386 547" />
        <path d="M680 546.500L1033 343L1386 546.500" strokeDasharray="2 1" />
        <path d="M838.500 657L1226.500 433V455M838.500 657V701L858 690" />
        <path d="M819 443L838 454M819 690L857 668M1226 455L1246 444M1209 669L1246 689" />
        <path d="M1033 545V590" />
      </g>
      <path d="M1028 567h9M1032 566v6M1035 565v5" stroke="#ffdd00" strokeWidth="2" />

      {/* ring, lower half sits behind its mid plane */}
      <path d="M908.500 394A124.500 71.900 0 0 0 1157.500 394V434A124.500 71.900 0 0 1 908.500 434z" fill="url(#ringWall)" />
      <rect x="950" y="340" width="166" height="100" fill="url(#ringInner)" mask="url(#ringMask)" />
      <path d="M1033 302L1227 414L1033 526L839 414z" fill={TINT} />
      <path d="M1129.500 335.500V380L1110 391V347z" fill={TINT} />
      <path d="M936 335.500L957 348L936 360z" fill={BLUE} />
      <path d="M839 414L1033 302L1227 414" stroke="#ffff00" />
      <path d="M908.500 394A124.500 71.900 0 0 0 1157.500 394V414A124.500 71.900 0 0 1 908.500 414z" fill="url(#ringWall)" />
      <rect x="950" y="340" width="166" height="100" fill="url(#ringInner)" mask="url(#ringMaskUpper)" />
      <path d="M908.500 394a124.500 71.900 0 1 0 249 0a124.500 71.900 0 1 0 -249 0zM958.300 394a74.700 43 0 1 0 149.400 0a74.700 43 0 1 0 -149.400 0z" fill="#ff0000" fillRule="evenodd" />
      <g clipPath="url(#ringTop)">
        <g clipPath="url(#ringSpan)">
          <path d="M936 447.500L1129.500 335.500V380L936 492z" fill={TINT} />
          <path d="M1000 433L1086 384M1000 455L1086 405" stroke="#ffff00" />
          <path d="M936 335.500L1129.500 447V492L936 380z" fill={BLUE} />
          <path d="M979 384L1064 433" stroke="#ffff00" />
        </g>
      </g>
      <path d="M936 447.500L945 443V487L936 492z" fill={TINT} />
      <path d="M1121 442L1129.500 447V492L1121 487z" fill={BLUE} />
      <path d="M942 338L979 360M1086 422L1130 447.500" stroke="#2f78dc" strokeWidth="2" />
      <g stroke="#ffff00">
        <path d="M839 414L1033 526L1227 414" />
        <path d="M935.500 447.500L1129.500 335.500V348M935.500 447.500V492L946 486" />
        <path d="M926 475L945 464M926 352L930 354M1135 352L1139 354M1121 465L1139 476" />
        <path d="M1033 391V436" />
      </g>
      <path d="M1028 414h9M1032 413v6M1035 412v5" stroke="#ffdd00" strokeWidth="2" />

      {/* selection handles */}
      <g stroke="#ffff00" strokeWidth="1.600">
        <circle cx="936.500" cy="335" r="6" />
        <circle cx="1130.500" cy="447" r="6" />
        <circle cx="1130.500" cy="491" r="6" />
        <circle cx="839.500" cy="432" r="6" />
        <circle cx="1227.500" cy="656" r="6" />
        <circle cx="1227.500" cy="701" r="6" />
      </g>

      {/* normals */}
      <g stroke="#e01818" fill="#e81c1c">
        <path d="M1140.500 590V623M1126 598L1154 614M1140 607L1152 600" />
        <path d="M1150 595L1168 590L1157 602H1152z" stroke="none" />
        <path d="M1129.500 448V492M1130 477L1143 484M1130 477L1142 470" />
        <path d="M1140 467L1157 462L1149 474L1141 471z" stroke="none" />
      </g>

      {/* coordinate triad */}
      <g transform="translate(305 919)" shapeRendering="auto">
        <path d="M.500 0V-24" stroke="#0000a0" strokeWidth="1.300" />
        <path d="M.500 0L18-10" stroke="#00a000" />
        <path d="M.500 0L18 11" stroke="#a00000" />
        <path d="M.500-37L9-23C6-19-5-19-8-23z" fill="#0000a8" />
        <path d="M16-19L32-18L25-6L16-10z" fill="#00b400" />
        <path d="M22 5L32 18L17 20L16 10z" fill="#d80000" />
      </g>
      <g className="font-['Liberation_Sans',sans-serif]" fontSize="17">
        <text x="300" y="881" fill="#3030ff">Z</text>
        <text x="338" y="903" fill="#20f020">Y</text>
        <text x="338" y="948" fill="#ff2020">X</text>
      </g>

      {/* view cube */}
      <g shapeRendering="auto" stroke="#6f7894" strokeWidth="1">
        <ellipse cx="1856" cy="250" rx="36" ry="16" fill="#253b78" stroke="none" opacity=".45" filter="blur(4px)" />
        <path d="M1856 187L1892 202L1856 223L1820 202z" fill="#8d9ccb" />
        <path d="M1820 202L1856 223V264L1824 241z" fill="#8f9cc4" />
        <path d="M1892 202L1856 223V264L1888 241z" fill="#8592bf" />
        <path d="M1849 219L1856 215L1863 219V226L1856 230L1849 226z" fill="#6f88c0" stroke="none" opacity=".6" />
      </g>
      <g className="font-['Liberation_Sans',sans-serif] font-bold" fill="#5c6689" fontSize="11" textAnchor="middle">
        <text transform="matrix(.8 .36 -.7 .5 1855 206)">TOP</text>
        <text transform="matrix(.66 .4 0 1.050 1839 237)">FRONT</text>
        <text transform="matrix(.66 -.4 0 1.050 1874 237)">RIGHT</text>
      </g>
    </svg>
  );
}

function NavBar() {
  return (
    <div className="absolute top-[140px] right-[3px] flex h-[189px] w-[33px] flex-col items-center border border-[#6b7ba8] bg-[#7b8cc0]">
      <Svg w={6} h={6} className="mt-[3px] mr-[3px] self-end">
        <path d="M.5 .5L5.500 5.500M5.500 .5L.5 5.500" stroke="#4d5878" />
      </Svg>
      <Svg w={24} h={24} className="mt-[7px]">
        <path d="M12 1H23V12A11 11 0 1 1 12 1z" fill="#b0bad4" stroke="#56617e" strokeWidth="1.500" />
        <path d="M4 17C8 15 16 15 20 17C17 23 7 23 4 17z" fill="#62b088" />
        <circle cx="12" cy="11" r="6" fill="#c0c9e0" stroke="#8590b0" />
        <circle cx="12" cy="11" r="3" stroke="#98a3c0" />
      </Svg>
      <Down className="mt-[8px] border-t-[#4d5878]" />
      <span className="mt-[6px] h-px w-6 bg-[#56617e]" />
      <Svg w={16} h={16} className="mt-[7px]">
        <path d="M5 15L1 9L2 8L5 10V3L6.500 3L7.500 7V1H9L9.500 7L11 2H12.500L12 8L14 5L15.500 6L13 12L11 15z" fill="#d4daea" stroke="#56617e" />
      </Svg>
      <Svg w={16} h={16} className="mt-[8px]">
        <circle cx="6.500" cy="6.500" r="5.500" fill="#b9c6e0" stroke="#56617e" strokeWidth="1.400" />
        <path d="M4 3H7L9 5V10H4z" fill="#eef" stroke="#56617e" />
        <path d="M10.500 10.500L15 15" stroke="#4d5878" strokeWidth="2.500" />
      </Svg>
      <Down className="mt-[7px] border-t-[#4d5878]" />
      <Svg w={16} h={16} className="mt-[8px]">
        <ellipse cx="7" cy="8" rx="3" ry="7.300" stroke="#56617e" />
        <path d="M11 4.500C17 6 17 10 8 11C-1 10.500-1 6 4 5" stroke="#56617e" />
        <path d="M7 6V10M5 8H9" stroke="#e02040" strokeWidth="1.400" />
      </Svg>
      <Down className="mt-[7px] border-t-[#4d5878]" />
      <Svg w={16} h={16} className="mt-[8px]">
        <path d="M3 5L8 1V3H13L12 5" fill="#c8d2e8" stroke="#56617e" />
        <rect x=".7" y="5" width="14.500" height="10" fill="#d8c850" stroke="#44537a" />
        <rect x="3.500" y="8" width="9" height="4" fill="#8fa4d0" stroke="#44537a" />
      </Svg>
      <Down className="mt-[8px] mr-[4px] self-end border-t-[#3a4568]" />
    </div>
  );
}

/* ---------- place constraint dialog ---------- */

function Group({ label, className, inner, children }: { label: string; className?: string; inner: string; children: ReactNode }) {
  return (
    <fieldset className={clsx("shrink-0 rounded-[4px] border border-[#d0dbe6]", className)}>
      <legend className="ml-[6px] px-[2px] leading-[14px]">{label}</legend>
      <div className={clsx("flex gap-[2px]", inner)}>{children}</div>
    </fieldset>
  );
}

function ToolBtn({ on, className, children }: { on?: boolean; className: string; children: ReactNode }) {
  return (
    <div
      className={clsx(
        "flex shrink-0 items-center justify-center rounded-[2px] border shadow-[inset_0_0_0_1px_rgba(255,255,255,0.6)]",
        on ? "border-[#2c628b] bg-linear-to-b from-[#cfe6f5] via-[#a5d5ee] to-[#6fb5dc]" : "border-[#8a8a8a] bg-linear-to-b from-[#f3f3f3] via-[#e4e4e4] to-[#cfcfcf]",
        className,
      )}
    >
      {children}
    </div>
  );
}

function Check({ on }: { on?: boolean }) {
  return (
    <span className="grid size-[13px] shrink-0 place-items-center border border-[#8e8f8f] bg-[#dfe3ea] shadow-[inset_0_0_0_1px_#fff]">
      {on && (
        <Svg w={9} h={9}>
          <path d="M1 4.500L3.500 7.500L8 1" stroke="#3a4f9a" strokeWidth="1.800" />
        </Svg>
      )}
    </span>
  );
}

const Cursor = () => <path d="M1 1V12L4 9.500L6 14L8 13L6 9H10z" fill="#fff" stroke="#111" strokeWidth=".9" />;

function Cuboid({ x, y, yellow }: { x: number; y: number; yellow?: boolean }) {
  return (
    <g transform={`translate(${x} ${y})`} stroke={yellow ? "#3a3a08" : "#22344e"} strokeWidth=".9" strokeLinejoin="round">
      <path d="M0 7L14 0L28 8V15L14 23L0 15z" fill={yellow ? "#f5e43c" : "#5f92cc"} />
      <path d="M0 7L14 0L28 8L14 14z" fill={yellow ? "#fbf08a" : "#8fb6e2"} />
      <path d="M14 14V23M14 0V8L0 15M14 8L28 15" opacity=".55" />
    </g>
  );
}

function Dialog() {
  return (
    <div className="absolute top-[327px] left-[52px] h-[235px] w-[323px] rounded-[6px] border border-[#39435a] bg-linear-to-br from-[#a8bfe2] via-[#b9d0f0] to-[#a9c3e8] px-[5px] font-['Noto_Sans',sans-serif] text-[11px] tracking-[-0.15px] text-black shadow-[0_0_8px_rgba(20,30,60,0.6),inset_0_0_0_1px_rgba(255,255,255,0.7)]">
      <div className="flex h-[28px] justify-between pr-[1px]">
        <span className="pt-[6px] text-[12px] leading-4 tracking-[-0.3px] text-[#1c2430]">Place Constraint</span>
        <span className="grid h-[18px] w-[47px] place-items-center rounded-b-[4px] border border-t-0 border-[#6d809f] bg-[#b7cbe8]">
          <Svg w={11} h={10}>
            <path d="M2 1.500L9 8.500M9 1.500L2 8.500" stroke="#555f72" strokeWidth="3.600" />
            <path d="M2 1.500L9 8.500M9 1.500L2 8.500" stroke="#fff" strokeWidth="1.800" />
          </Svg>
        </span>
      </div>
      <div className="h-[201px] border border-[#4c5b73] bg-[#f0f0f0]">
        <div className="flex h-[24px] items-end pt-[3px] text-center leading-4">
          <span className="relative z-10 -mb-px h-[21px] w-[61px] border border-b-0 border-[#8b8e94] bg-white pt-px pr-[2px]">Assembly</span>
          {[["Motion", "w-[42px]"], ["Transitional", "w-[67px]"], ["Constraint Set", "w-[79px]"]].map(([label, width]) => (
            <span key={label} className={clsx("h-[18px] shrink-0 border border-b-0 border-l-0 border-[#8b8e94] bg-linear-to-b from-[#f2f2f2] to-[#dcdcdc] whitespace-nowrap", width)}>
              {label}
            </span>
          ))}
        </div>
        <div className="h-[140px] w-[304px] border border-[#8b8e94] bg-white pl-[7px]">
          <div className="flex gap-[4px] pt-[3px]">
            <Group label="Type" className="h-[55px] w-[137px]" inner="pt-[8px] pl-[9px]">
              <ToolBtn on className="h-[27px] w-7">
                <Svg w={20} h={20}>
                  <path d="M10 2.500H18V9H10z" fill="#4a82c0" stroke="#111" />
                  <path d="M2.500 11.500H10.500V18H2.500z" fill="#fff" stroke="#111" />
                  <path d="M10.500 3V18" stroke="#e81818" strokeWidth="1.600" />
                </Svg>
              </ToolBtn>
              <ToolBtn className="h-[27px] w-7">
                <Svg w={20} h={20}>
                  <path d="M4 9L9 2.500L17 8.500L14 12z" fill="#3f78b8" stroke="#111" />
                  <path d="M3 13.500H16V17.500H3z" fill="#fff" stroke="#111" />
                  <path d="M8 5L3 12.500H16z" stroke="#e81818" strokeWidth="1.300" />
                </Svg>
              </ToolBtn>
              <ToolBtn className="h-[27px] w-7">
                <Svg w={20} h={20}>
                  <circle cx="7" cy="10" r="4.500" fill="#fff" stroke="#111" />
                  <rect x="13.500" y="2.500" width="4" height="15" fill="#5c92cc" stroke="#111" />
                  <circle cx="12" cy="10" r="2" fill="#e81818" />
                </Svg>
              </ToolBtn>
              <ToolBtn className="h-[27px] w-7">
                <Svg w={20} h={20}>
                  <path d="M2.500 6.500H7V18H2.500zM13 6.500H17.500V18H13z" fill="#fff" stroke="#111" />
                  <path d="M4 6V2.500H16V6H13V15H7V6z" fill="#5c92cc" stroke="#111" />
                  <path d="M4 6.500H7V18M16 6.500H13V18" stroke="#e81818" strokeWidth="1.300" />
                </Svg>
              </ToolBtn>
            </Group>
            <Group label="Selections" className="h-[55px] w-[150px]" inner="pt-[8px] pl-[6px]">
              {[["1", "bg-[#1e90ff]"], ["2", "bg-[#8fdc70]"]].map(([n, bar]) => (
                <ToolBtn key={n} className="h-[27px] w-[31px] flex-col">
                  <span className="flex items-center gap-[5px] text-[12px] leading-[15px]">
                    <Svg w={11} h={15}>
                      <Cursor />
                    </Svg>
                    {n}
                  </span>
                  <i className={clsx("mt-[2px] block h-[2px] w-[22px]", bar)} />
                </ToolBtn>
              ))}
              <span className="mt-[7px] ml-[38px] flex gap-[6px]">
                <Check />
                <Svg w={16} h={16}>
                  <path d="M1 4L4 1H15V11L11 15H1z" fill="#fff" stroke="#f01818" strokeWidth="1.600" />
                  <path d="M1 4H11V15M11 4L15 1" stroke="#f01818" strokeWidth="1.400" />
                  <g transform="translate(4 5) scale(.8)">
                    <Cursor />
                  </g>
                </Svg>
              </span>
            </Group>
          </div>
          <div className="flex">
            <div className="w-[118px] pt-[4px]">
              <div className="h-[18px] leading-[18px]">Offset:</div>
              <div className="flex h-5 w-[113px] items-center justify-between border border-[#dcdcde] border-t-[#abadb3] pl-[5px]">
                0
                <span className="grid h-full w-4 place-items-center bg-[#ececec]">
                  <i className="block size-0 border-y-[3px] border-l-[4px] border-y-transparent border-l-[#444]" />
                </span>
              </div>
              <div className="flex h-[24px] items-center pt-[14px]">
                <Check on />
                <Svg w={29} h={14} className="ml-[5px]">
                  <path d="M1.500 5H9.500V9C9.500 13 1.500 13 1.500 9zM13.500 6H23V9C23 13 13.500 13 13.500 9z" fill="#cfe8e8" stroke="#111" strokeWidth="1.200" />
                  <path d="M9.500 7H13.500M3 5C4 2 5 1 7 1M23 7L27 1L28 4" stroke="#111" strokeWidth="1.200" />
                </Svg>
                <span className="ml-[13px]" />
                <Check on />
                <Svg w={23} h={16} className="ml-[4px]">
                  <path d="M1 1H5V15H1zM3 3.500H5M3 6H5M3 8.500H5M3 11H5" fill="#fff" stroke="#1c3f68" />
                  <path d="M9 1H21.500V6H9zM8.500 10H15V15H8.500z" fill="#4a82c0" />
                  <path d="M15 2V12" stroke="#e81818" strokeWidth="1.600" />
                </Svg>
              </div>
            </div>
            <Group label="Solution" className="mt-px h-[62px] w-[173px]" inner="pt-[7px] pl-[17px]">
              <ToolBtn className="h-[34px] w-[73px]">
                <Svg w={60} h={28}>
                  <Cuboid x={4} y={3} />
                  <g transform="translate(33 5) scale(.83 .9)">
                    <Cuboid x={0} y={0} yellow />
                  </g>
                  <path d="M18 17L32 10V18L18 26z" fill="#fff" stroke="#e81818" />
                  <path d="M30 4L44 12M24 18L38 25M27 14V21M23 17L28 18" stroke="#e01010" strokeWidth="1.300" />
                  <path d="M28 2L34 4L31 7zM40 26L34 25L37 21z" fill="#e01010" />
                </Svg>
              </ToolBtn>
              <ToolBtn on className="h-[34px] w-[73px]">
                <Svg w={60} h={28}>
                  <g transform="translate(24 1) scale(.83 .9)">
                    <Cuboid x={0} y={0} yellow />
                  </g>
                  <Cuboid x={4} y={4} />
                  <path d="M18 18L32 11V18L18 26zM33 10L47 4V12L33 18z" fill="#fff" stroke="#e81818" />
                  <path d="M24 18L38 25M38 11L52 18M27 14V21M41 7V14" stroke="#e01010" strokeWidth="1.300" />
                  <path d="M40 26L34 25L37 21zM54 19L48 18L51 14z" fill="#e01010" />
                </Svg>
              </ToolBtn>
            </Group>
          </div>
        </div>
        <div className="flex pt-[6px]">
          <ToolBtn className="h-[21px] w-[22px]">
            <HelpIcon />
          </ToolBtn>
          <ToolBtn className="ml-[19px] h-[21px] w-[73px]">OK</ToolBtn>
          <ToolBtn className="ml-[6px] h-[21px] w-[73px]">Cancel</ToolBtn>
          <ToolBtn className="ml-[7px] h-[21px] w-[73px]">Apply</ToolBtn>
        </div>
      </div>
    </div>
  );
}

// four horizontal colour bands, each faded into the next one down
function Backdrop() {
  return (
    <>
      <div className="absolute inset-0 bg-[linear-gradient(90deg,#4a62aa_0%,#6478b6_16%,#7e90c3_30%,#788bc0_40%,#566db0_54.5%,#425ba4_66%,#3b559e_80%,#3b559e_100%)]" />
      <div className="absolute inset-0 bg-[linear-gradient(90deg,#6c80bb_0%,#8f9ecb_16%,#afbada_30%,#adb8d8_37%,#9daad0_47.6%,#7083b6_72%,#4a62a6_87%,#3f589f_100%)] [mask-image:linear-gradient(180deg,transparent_0%,black_30%)]" />
      <div className="absolute inset-0 bg-[linear-gradient(90deg,#8b9ac8_0%,#bcc5df_16%,#e2e6f1_30%,#e9ecf5_37%,#dde2ef_47.6%,#a3b0d4_72%,#7488bd_87%,#4d66a8_100%)] [mask-image:linear-gradient(180deg,transparent_30%,black_65%)]" />
      <div className="absolute inset-0 bg-[linear-gradient(90deg,#a5b1d6_0%,#cdd3e6_16%,#f3f5fa_31%,#ffffff_40%,#f8f9fc_48%,#d0d6e8_63%,#94a2cc_81%,#6176b4_100%)] [mask-image:linear-gradient(180deg,transparent_65%,black_100%)]" />
    </>
  );
}

function Viewport() {
  return (
    <div className="relative h-[858px] overflow-hidden border-t border-l border-[#6d6d6d]">
      <Backdrop />
      <Scene />
      <div className="absolute top-[4px] right-[7px] flex items-end gap-[8px]">
        <i className="mb-px block h-[4px] w-3 border border-[#333] bg-white" />
        <Svg w={12} h={12}>
          <path d="M3.500 1H11V8.500H9V11H1V3.500H3.500z" fill="#fff" stroke="#333" />
          <rect x="3.500" y="5.500" width="3" height="3" fill="#3c569e" stroke="#333" strokeWidth=".6" />
        </Svg>
        <Svg w={12} h={11}>
          <path d="M2 1.500L10 9.500M10 1.500L2 9.500" stroke="#333" strokeWidth="3.800" />
          <path d="M2 1.500L10 9.500M10 1.500L2 9.500" stroke="#fff" strokeWidth="2.200" />
        </Svg>
      </div>
      <NavBar />
      <Dialog />
      <div className="absolute inset-y-0 right-0 w-[2px] bg-[#e4e6ee]" />
    </div>
  );
}

function DocTabs() {
  return (
    <div className="flex h-[23px] items-start border-t-2 border-t-[#777] bg-linear-to-b from-[#d8d8d8] to-[#b8b8b8] font-['Noto_Sans',sans-serif] text-[11.5px] leading-[19px] tracking-[-0.15px] text-[#3f4347]">
      <div className="grid h-[21px] w-5 place-items-center border border-[#444]">
        <Svg w={17} h={15}>
          <path d="M1 1H11V8H1zM3.500 4H13.500V11H3.500zM6 7H16V14H6z" fill="#e8e8ea" stroke="#33363c" strokeWidth="1.200" />
        </Svg>
      </div>
      <div className="grid h-[21px] w-5 place-items-center border border-[#444]">
        <Svg w={16} h={14}>
          <path d="M1 1H7V6H1zM9 1H15V6H9zM1 8H7V13H1zM9 8H15V13H9z" fill="#e8e8ea" stroke="#33363c" strokeWidth="1.200" />
        </Svg>
      </div>
      <div className="flex h-[21px] w-[19px] justify-center border border-[#444] bg-[#e4e4e6] pt-1">
        <i className="block size-0 border-x-[5px] border-b-[5px] border-x-transparent border-b-[#333]" />
      </div>
      <span className="h-[19px] w-[64px] rounded-b-[5px] border border-t-0 border-[#777] bg-[#d4d4d5] pr-[3px] text-center">Part1.ipt</span>
      <span className="h-[19px] w-[64px] rounded-b-[5px] border border-t-0 border-[#777] bg-[#d4d4d5] pr-[3px] text-center">Part2.ipt</span>
      <span className="flex h-[19px] w-[88px] justify-between rounded-b-[5px] border border-t-0 border-[#777] bg-white pr-[8px] pl-[7px]">
        Assembly1
        <Svg w={9} h={9} className="mt-[2px]">
          <path d="M1 1H3L4.500 3L6 1H8V3L6 4.500L8 6V8H6L4.500 6L3 8H1V6L3 4.500L1 3z" stroke="#555" strokeWidth=".8" />
        </Svg>
      </span>
    </div>
  );
}

/* ---------- taskbar ---------- */

const TaskButton = ({ active, children }: { active?: boolean; children: ReactNode }) => (
  <div
    className={clsx(
      "grid h-[38px] w-[58px] shrink-0 place-items-center rounded-[3px] border border-[#22344e] shadow-[inset_0_0_0_1px_rgba(210,225,245,0.75)]",
      active ? "bg-linear-to-br from-[#e8eef7] to-[#8fa8c8]" : "bg-linear-to-br from-[#a9bdd8] to-[#54759f]",
    )}
  >
    {children}
  </div>
);

function Taskbar() {
  return (
    <footer className="relative flex h-10 items-center overflow-hidden border-t border-[#1a2434] bg-[linear-gradient(90deg,#4a6a94_0px,#4f7099_60px,#5f82ae_300px,#5a7dac_366px,#a8d0f8_378px,#b0d4fa_402px,#7d9fc4_410px,#0c1016_418px,#0a0d12_1200px,#11161c_1690px,#7e9cbf_1702px,#56749a_1722px,#47658c_1800px,#3d5a80_1920px)] font-['Noto_Sans',sans-serif] text-white shadow-[inset_0_1px_0_rgba(190,210,235,0.6)]">
      <div className="absolute -top-7 left-[1614px] size-[54px] rounded-full bg-[#8c3a44] blur-[3px]" />
      <Svg w={40} h={38} className="ml-[7px]">
        <defs>
          <radialGradient id="orb" cx="50%" cy="90%" r="80%">
            <stop offset="0" stopColor="#5be0ff" />
            <stop offset=".45" stopColor="#1a78b8" />
            <stop offset="1" stopColor="#123a66" />
          </radialGradient>
        </defs>
        <circle cx="20" cy="19" r="18" fill="url(#orb)" stroke="#8fb4d8" />
        <path d="M4 15A17 17 0 0 1 36 15Q20 20 4 15z" fill="#fff" opacity=".3" />
        <path d="M12 10Q16 8 19.500 10.500L18 18Q14 16 10 18z" fill="#f0562a" />
        <path d="M21 11Q26 14 30 11.500L28 19Q24 21 19.500 18.500z" fill="#8fcb3a" />
        <path d="M9.500 20Q14 18 17.500 20L16 27.500Q12 26 8 28z" fill="#3aa0ea" />
        <path d="M19 20.500Q24 23 28 20.500L26 28.500Q22 31 17.500 28z" fill="#fbc428" />
      </Svg>
      <div className="ml-[13px] flex gap-1">
        <TaskButton>
          <Svg w={32} h={32}>
            <circle cx="16" cy="16" r="15.500" fill="#f2c830" />
            <path d="M16 16L2.600 8.300A15.500 15.500 0 0 1 29.400 8.300H16z" fill="#d8282a" />
            <path d="M2.600 8.300A15.500 15.500 0 0 0 15 31.500L21 20L10 19z" fill="#44a048" />
            <circle cx="16" cy="16" r="7" fill="#e8eef6" />
            <circle cx="16" cy="16" r="5.500" fill="#2a78d8" />
            <circle cx="15" cy="14" r="2" fill="#9ad0ff" />
          </Svg>
        </TaskButton>
        <TaskButton>
          <Svg w={34} h={32}>
            <path d="M2 6L4 3H12L14 6H30V28H2z" fill="#f0d47a" stroke="#b08a30" />
            <path d="M5 3H9V5H5zM12 4H15V6H12z" fill="#3aa040" />
            <path d="M20 6H26V8H20z" fill="#3a80d8" />
            <path d="M2 10H32V28H2z" fill="#fae8a4" stroke="#c8a850" />
            <path d="M7 30V19H27V30H22V24H12V30z" fill="#9fd4f0" stroke="#4a98c8" />
          </Svg>
        </TaskButton>
        <TaskButton>
          <Svg w={34} h={32}>
            <defs>
              <linearGradient id="pal" x1="0" y1="0" x2="1" y2="1">
                <stop offset="0" stopColor="#4050e0" />
                <stop offset=".25" stopColor="#5a38c8" />
                <stop offset=".5" stopColor="#28a848" />
                <stop offset=".75" stopColor="#e8e020" />
                <stop offset="1" stopColor="#f0a020" />
              </linearGradient>
            </defs>
            <path d="M10 3C20-1 26 6 22 13C19 18 31 16 31 23C31 30 20 30 14 26C0 22-1 8 10 3z" fill="url(#pal)" />
            <path d="M31 1L12 22" stroke="#8a4a20" strokeWidth="2.500" />
            <path d="M14 18L10 22L3 31L12 25L16 21z" fill="#15181e" />
          </Svg>
        </TaskButton>
        <TaskButton active>
          <span className="relative block h-8 w-8">
            <Svg w={34} h={32}>
              <rect x="2" y="8" width="28" height="23" fill="#f6f6f6" stroke="#8a8a8a" />
              <path d="M2 31H31" stroke="#222" strokeWidth="1.500" />
              <path d="M2 2L14 1V5L12 6L15 20L18 20V24L8 25V21L10 20L7 7L2 7z" fill="#f5a81c" stroke="#8c5208" />
            </Svg>
            <span className="absolute right-[2px] bottom-[2px] text-[7px] leading-none font-bold text-[#222]">PRO</span>
          </span>
        </TaskButton>
      </div>
      <span className="flex-1" />
      <div className="flex h-full items-center">
        <i className="mr-[13px] block size-0 border-x-4 border-b-4 border-x-transparent border-b-white" />
        <Svg w={16} h={16}>
          <circle cx="8" cy="8" r="7.500" fill="#1a9048" stroke="#e0f0e4" />
          <path d="M5 4V10C5 12 10 12 10 9V4M10 9C10 11 11 11 12 11M5 9L4 13" stroke="#fff" strokeWidth="1.800" />
        </Svg>
        <Svg w={16} h={14} className="ml-2">
          <rect x=".5" y=".5" width="15" height="13" fill="#fff" stroke="#000" />
          <path d="M1 1L8 8L15 1M1 13L6 6M15 13L10 6" stroke="#000" strokeWidth="1.400" />
        </Svg>
        <Svg w={14} h={16} className="ml-[9px]">
          <path d="M4 7V4a3 3 0 0 1 6 0V7" stroke="#10e010" strokeWidth="2" />
          <path d="M2 6H12L13 15H1z" fill="#10f010" />
          <circle cx="7" cy="9" r="1.500" fill="#fff" />
        </Svg>
        <Svg w={16} h={16} className="ml-[10px]">
          <path d="M5 4.500H15V12.500H5zM8 15H13M10.500 12.500V15" stroke="#fff" strokeWidth="1.200" />
          <path d="M1 1V4H5V1M3 4V14H8" stroke="#fff" strokeWidth="1.200" />
        </Svg>
        <Svg w={16} h={16} className="ml-[8px]">
          <path d="M1 5.500H4L8 2V14L4 10.500H1z" fill="#fff" />
          <path d="M10 5.500C11 7 11 9 10 10.500M12 4C14 6.500 14 9.500 12 12" stroke="#dfe6f0" />
        </Svg>
        <span className="ml-[14px] flex w-[24px] flex-col items-center font-['DejaVu_Sans',sans-serif] text-[8px] leading-[8px] tracking-[0.5px]">
          <span>9</span>
          <span>DEZ</span>
        </span>
        <span className="ml-[5px] w-[48px] text-center font-['DejaVu_Sans',sans-serif] text-[19px] leading-none">8:40</span>
        <span className="ml-[4px] pt-[7px] font-['DejaVu_Sans',sans-serif] text-[8px] leading-none tracking-[0.5px]">SA</span>
        <span className="mr-px ml-[11px] h-[38px] w-[14px] rounded-[2px] border border-[#22344e] bg-linear-to-b from-[#8ba4c6] to-[#2f4a70] shadow-[inset_0_0_0_1px_rgba(190,210,235,0.6)]" />
      </div>
    </footer>
  );
}

export default function App() {
  return (
    <div className="flex h-[1080px] w-[1920px] flex-col overflow-hidden bg-[#f0f0f0]">
      <TitleBar />
      <Ribbon />
      <main className="flex h-[881px]">
        <Browser />
        <div className="flex w-[1694px] flex-col">
          <Viewport />
          <DocTabs />
        </div>
      </main>
      <div className="flex h-[19px] items-center border-t border-[#aaa] bg-linear-to-b from-[#f4f4f4] to-[#b4b4b4] pt-px pl-[2px] font-['Noto_Sans',sans-serif] text-[11.5px] tracking-[-0.2px] text-black">
        <span className="flex-1">Ready</span>
        <span className="w-[31px]">2</span>
        <span className="h-full w-[39px] border-l border-[#d8d8d8] pl-[7px] leading-[17px]">3</span>
      </div>
      <Taskbar />
    </div>
  );
}
